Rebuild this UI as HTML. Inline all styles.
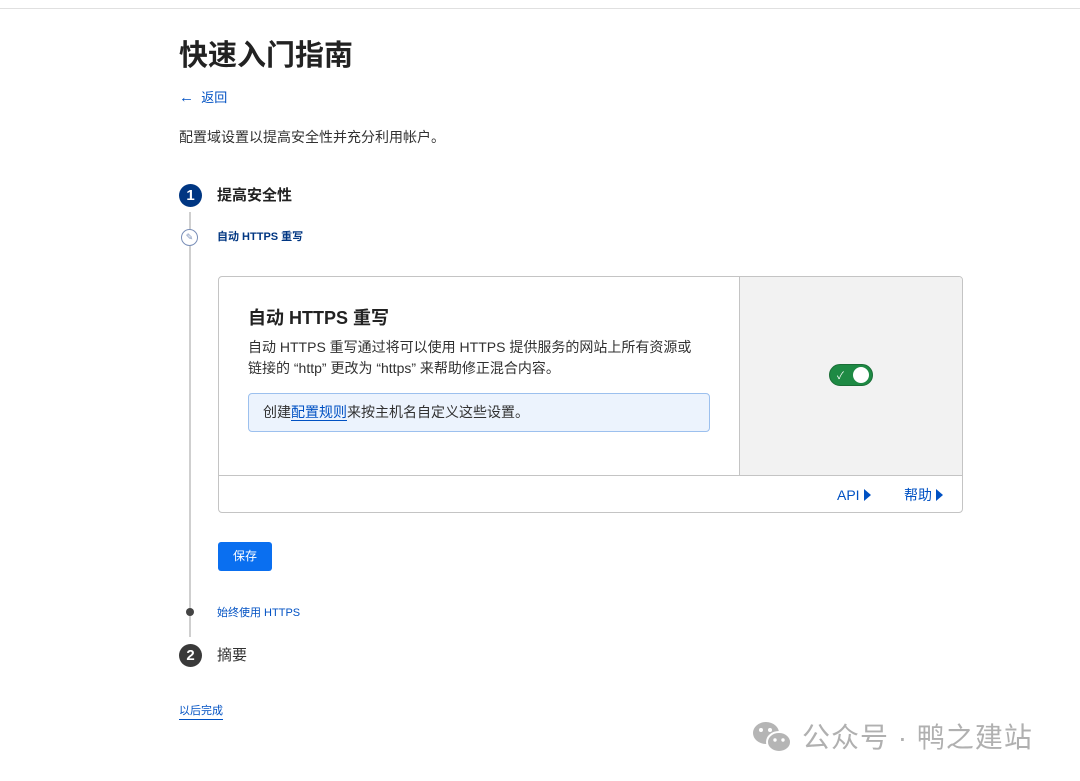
<!DOCTYPE html>
<html><head><meta charset="utf-8"><style>
body{margin:0;width:1080px;height:781px;background:#fff;position:relative;overflow:hidden;font-family:"Liberation Sans","Noto Sans CJK SC",sans-serif;color:#313131}
.a{position:absolute;white-space:nowrap}
.tri{display:inline-block;width:0;height:0;border-top:6px solid transparent;border-bottom:6px solid transparent;border-left:7px solid #0051c3;vertical-align:-1px;margin-left:4px}
</style></head><body>
<div class="a" style="left:0;top:8px;width:1080px;height:1px;background:#e0e0e0"></div>
<div class="a" style="left:179px;top:37px;font-size:29px;font-weight:bold;color:#222;line-height:38px">快速入门指南</div>
<div class="a" style="left:179px;top:89px;font-size:13px;color:#0051c3;line-height:18px"><span style="font-size:15px">←</span>&nbsp; 返回</div>
<div class="a" style="left:179px;top:127px;font-size:14px;color:#313131;line-height:20px">配置域设置以提高安全性并充分利用帐户。</div>
<div class="a" style="left:189px;top:212px;width:2px;height:425px;background:#cfcfcf"></div>
<div class="a" style="left:179px;top:184px;width:23px;height:23px;border-radius:50%;background:#003682;color:#fff;font-weight:bold;font-size:15px;text-align:center;line-height:23px">1</div>
<div class="a" style="left:217px;top:185px;font-size:15px;font-weight:bold;color:#222;line-height:22px">提高安全性</div>
<div class="a" style="left:181px;top:229px;width:17px;height:17px;border-radius:50%;border:1.5px solid #7a8fb8;background:#fff;box-sizing:border-box;font-size:9px;color:#7a8fb8;text-align:center;line-height:14px">✎</div>
<div class="a" style="left:217px;top:229px;font-size:11px;font-weight:bold;color:#003682;line-height:16px">自动 HTTPS 重写</div>
<div class="a" style="left:218px;top:276px;width:745px;height:237px;border:1px solid #c4c4c4;border-radius:4px;box-sizing:border-box;overflow:hidden">
 <div class="a" style="left:520px;top:0;width:224px;height:199px;background:#f2f2f2;border-left:1px solid #c4c4c4"></div>
 <div class="a" style="left:0;top:198px;width:745px;height:1px;background:#c4c4c4"></div>
 <div class="a" style="left:610px;top:87px;width:44px;height:22px;border-radius:11px;background:#1e8a44;border:1px solid #1a6e37;box-sizing:border-box">
  <span class="a" style="left:7px;top:2px;color:#fff;font-size:10px">✓</span>
  <span class="a" style="left:23px;top:2px;width:16px;height:16px;border-radius:50%;background:#fff"></span></div>
 <div class="a" style="left:618px;top:208px;font-size:14px;color:#0051c3;line-height:20px">API<span class="tri"></span></div>
 <div class="a" style="left:685px;top:208px;font-size:14px;color:#0051c3;line-height:20px">帮助<span class="tri"></span></div>
 <div class="a" style="left:29px;top:28px;font-size:18px;font-weight:bold;color:#222;line-height:26px">自动 HTTPS 重写</div>
 <div class="a" style="left:29px;top:60px;font-size:14px;color:#313131;line-height:21px">自动 HTTPS 重写通过将可以使用 HTTPS 提供服务的网站上所有资源或<br>链接的 “http” 更改为 “https” 来帮助修正混合内容。</div>
 <div class="a" style="left:29px;top:116px;width:462px;height:39px;background:#ecf3fd;border:1px solid #9cc0ee;border-radius:4px;box-sizing:border-box;font-size:14px;line-height:37px;padding-left:14px">创建<span style="color:#0051c3;border-bottom:1px solid #0051c3">配置规则</span>来按主机名自定义这些设置。</div>
</div>
<div class="a" style="left:218px;top:542px;width:54px;height:29px;background:#0a6ff0;border-radius:3px;color:#fff;font-size:12px;text-align:center;line-height:29px">保存</div>
<div class="a" style="left:186px;top:608px;width:8px;height:8px;border-radius:50%;background:#444"></div>
<div class="a" style="left:217px;top:605px;font-size:11px;color:#0051c3;line-height:16px">始终使用 HTTPS</div>
<div class="a" style="left:179px;top:644px;width:23px;height:23px;border-radius:50%;background:#3a3a3a;color:#fff;font-weight:bold;font-size:15px;text-align:center;line-height:23px">2</div>
<div class="a" style="left:217px;top:645px;font-size:15px;color:#313131;line-height:22px">摘要</div>
<div class="a" style="left:179px;top:704px;font-size:11px;color:#0051c3;line-height:15px;border-bottom:1px solid #0051c3">以后完成</div>
<svg class="a" style="left:752px;top:721px" width="42" height="34" viewBox="0 0 42 34"><ellipse cx="14" cy="12" rx="13" ry="11" fill="#b5b5b5"/><ellipse cx="27" cy="21" rx="12" ry="10" fill="#b5b5b5" stroke="#fff" stroke-width="2"/><circle cx="9" cy="9" r="2" fill="#fff"/><circle cx="18" cy="9" r="2" fill="#fff"/><circle cx="23" cy="19" r="1.7" fill="#fff"/><circle cx="31" cy="19" r="1.7" fill="#fff"/></svg>
<div class="a" style="left:802px;top:721px;font-size:28px;letter-spacing:1px;color:#b0b0b0;line-height:34px">公众号 · 鸭之建站</div>
</body></html>
